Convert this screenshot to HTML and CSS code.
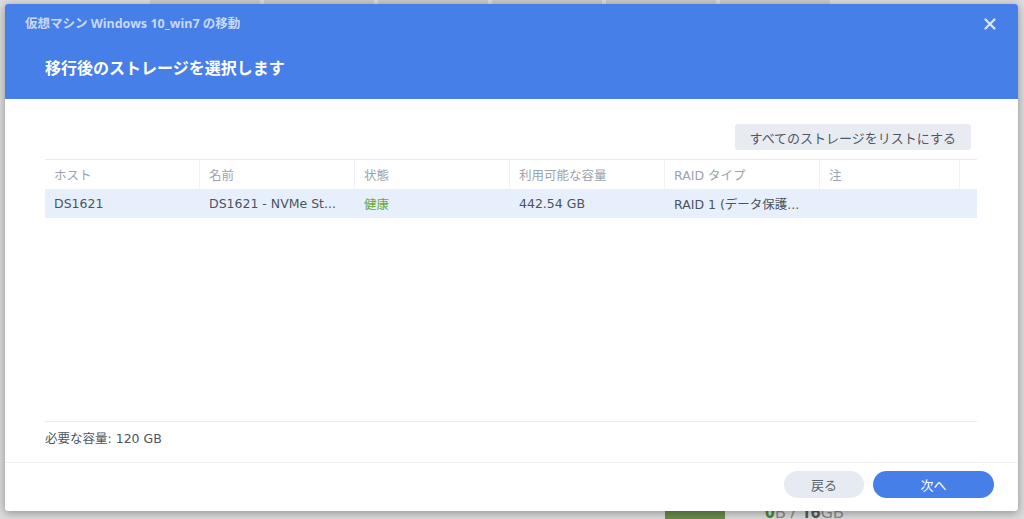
FILE: index.html
```html
<!DOCTYPE html>
<html lang="ja">
  <head>
    <meta charset="UTF-8" />
    <title>仮想マシンの移動</title>
    <link rel="stylesheet" href="styles.css">
  </head>
  <body>
    <div class="backdrop">
      <div class="bg-tabs">
        <span></span><span></span><span></span><span></span><span></span><span></span>
      </div>
      <div class="bg-foot">
        <div class="bg-chip"></div>
        <div class="bg-mem"><b class="used">0</b>B / <b>16</b>GB</div>
      </div>
    </div>

    <section class="dialog" aria-labelledby="dlg-sub">
      <header class="dlg-head">
        <div class="dlg-title">仮想マシン Windows 10_win7 の移動</div>
        <button class="dlg-close" aria-label="閉じる">
          <svg width="12" height="12" viewBox="0 0 12 12">
            <path d="M1.5 1.5 L10.5 10.5 M10.5 1.5 L1.5 10.5" stroke="#dfe8fb" stroke-width="2.2" stroke-linecap="round" />
          </svg>
        </button>
        <h2 id="dlg-sub" class="dlg-sub">移行後のストレージを選択します</h2>
      </header>

      <div class="dlg-body">
        <div class="toolbar">
          <button class="btn-gray">すべてのストレージをリストにする</button>
        </div>
        <div class="grid">
          <div class="grid-head">
            <div class="cell">ホスト</div>
            <div class="cell">名前</div>
            <div class="cell">状態</div>
            <div class="cell">利用可能な容量</div>
            <div class="cell">RAID タイプ</div>
            <div class="cell">注</div>
            <div class="cell"></div>
          </div>
          <div class="grid-row selected">
            <div class="cell">DS1621</div>
            <div class="cell">DS1621 - NVMe St...</div>
            <div class="cell ok">健康</div>
            <div class="cell">442.54 GB</div>
            <div class="cell">RAID 1 (データ保護...</div>
            <div class="cell"></div>
            <div class="cell"></div>
          </div>
        </div>
        <div class="need">必要な容量: 120 GB</div>
      </div>

      <footer class="dlg-foot">
        <button class="btn-pill back">戻る</button>
        <button class="btn-pill next">次へ</button>
      </footer>
    </section>
  </body>
</html>
```

FILE: styles.css
```css
html, body {
  margin: 0;
  height: 100%;
}
body {
  background: #d9d9d9;
  font-family: "DejaVu Sans", "Noto Sans CJK JP", sans-serif;
  font-size: 12.5px;
  color: #4a545e;
  overflow: hidden;
}
button {
  font-family: inherit;
}

/* app behind the modal */
.backdrop {
  height: 100%;
  display: flex;
  flex-direction: column;
  justify-content: space-between;
  background: #dcdcdc;
}
.bg-tabs {
  display: flex;
  gap: 4px;
  height: 5px;
  padding-left: 150px;
}
.bg-tabs span {
  width: 110px;
  background: #c9c9c9;
}
.bg-foot {
  display: flex;
  align-items: flex-end;
  gap: 40px;
  padding-left: 665px;
  height: 14px;
}
.bg-chip {
  width: 60px;
  height: 14px;
  background: #6c8a4e;
  border-top: 4px solid #2c2c2c;
  box-sizing: border-box;
}
.bg-mem {
  font-family: "Noto Sans", sans-serif;
  font-size: 17px;
  line-height: 14px;
  height: 14px;
  overflow: hidden;
  color: #8a8a8a;
}
.bg-mem b {
  color: #5a5a5a;
}
.bg-mem .used {
  color: #4a8a2a;
}

/* modal */
.dialog {
  position: absolute;
  left: 5px;
  top: 4px;
  width: 1013px;
  height: 507px;
  background: #fff;
  border-radius: 3px;
  box-shadow: 0 2px 10px rgba(0, 0, 0, 0.35);
  display: flex;
  flex-direction: column;
  overflow: hidden;
}
.dlg-head {
  background: #477fe8;
  height: 95px;
  box-sizing: border-box;
  padding: 12px 20px 0 20px;
  position: relative;
}
.dlg-title {
  font-family: "Noto Sans", "Noto Sans CJK JP", sans-serif;
  color: #c9d8f6;
  font-weight: 700;
  font-size: 12.5px;
  line-height: 16px;
}
.dlg-close {
  position: absolute;
  right: 22px;
  top: 14px;
  border: none;
  background: none;
  padding: 0;
  width: 12px;
  height: 12px;
  display: flex;
}
.dlg-sub {
  font-family: "Noto Sans", "Noto Sans CJK JP", sans-serif;
  margin: 25px 0 0 20px;
  color: #fff;
  font-size: 16px;
  font-weight: 700;
  line-height: 22px;
}

.dlg-body {
  flex: 1;
  padding: 25px 41px 0 40px;
  display: flex;
  flex-direction: column;
}
.toolbar {
  display: flex;
  justify-content: flex-end;
  padding-right: 6px;
  margin-bottom: 9px;
}
.btn-gray {
  font-family: "Noto Sans", "Noto Sans CJK JP", sans-serif;
  background: #e8ecf2;
  border: none;
  border-radius: 3px;
  color: #4e5864;
  font-size: 13px;
  height: 26px;
  padding: 0 15px;
}
.grid {
  flex: 1;
  border-top: 1px solid #e6ebf3;
  border-bottom: 1px solid #e6ebf3;
}
.grid-head,
.grid-row {
  display: grid;
  grid-template-columns: 155px 155px 155px 155px 155px 140px 17px;
  height: 29px;
  align-items: stretch;
}
.grid-head .cell {
  color: #9aa3ad;
  border-right: 1px solid #eef1f6;
}
.grid-head .cell:last-child {
  border-right: none;
}
.cell {
  display: flex;
  align-items: center;
  padding-left: 9px;
  white-space: nowrap;
  overflow: hidden;
}
.grid-row.selected {
  background: #e8effc;
}
.grid-row .cell.ok {
  color: #62ab38;
}
.need {
  height: 40px;
  box-sizing: border-box;
  padding-top: 6px;
}

.dlg-foot {
  border-top: 1px solid #eef1f6;
  height: 49px;
  box-sizing: border-box;
  display: flex;
  justify-content: flex-end;
  align-items: flex-start;
  padding-top: 8px;
  gap: 9px;
  padding-right: 24px;
}
.btn-pill {
  font-family: "Noto Sans", "Noto Sans CJK JP", sans-serif;
  border: none;
  border-radius: 14px;
  height: 27px;
  font-size: 13px;
}
.btn-pill.back {
  width: 80px;
  background: #e6ebf3;
  color: #5a646e;
}
.btn-pill.next {
  width: 121px;
  background: #477fe8;
  color: #fff;
}
```
